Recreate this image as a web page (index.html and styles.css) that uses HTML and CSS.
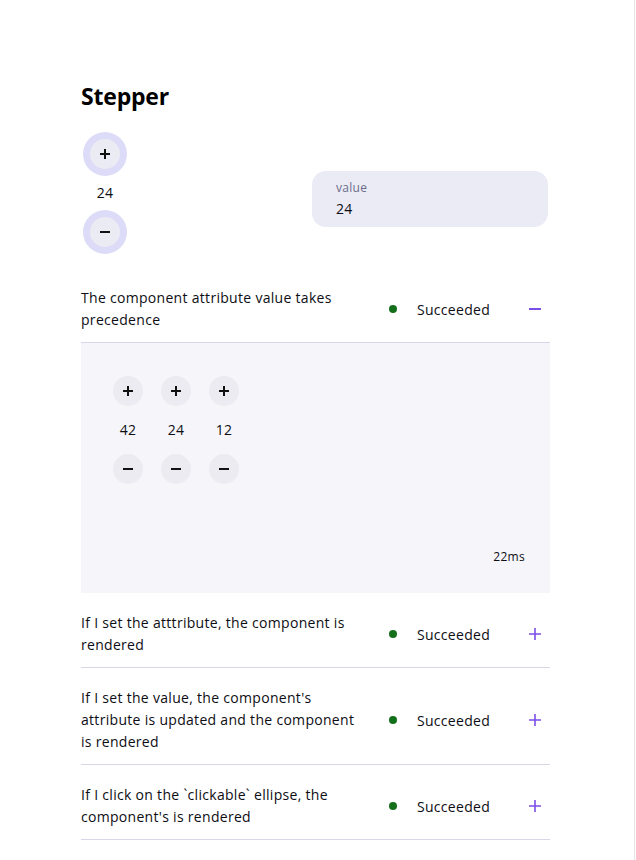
FILE: index.html
```html
<!DOCTYPE html>
<html lang="en">
<head>
<meta charset="utf-8">
<title>Stepper</title>
<link rel="stylesheet" href="styles.css">
</head>
<body>
<div class="page">
  <main class="content">
    <h1 class="title">Stepper</h1>

    <section class="demo">
      <div class="stepper stepper--focus">
        <button class="step-btn" aria-label="increment">
          <svg viewBox="0 0 12 12" width="12" height="12"><path d="M6 1v10M1 6h10" stroke="#111" stroke-width="2" fill="none"/></svg>
        </button>
        <span class="step-value">24</span>
        <button class="step-btn" aria-label="decrement">
          <svg viewBox="0 0 12 12" width="12" height="12"><path d="M1 6h10" stroke="#111" stroke-width="2" fill="none"/></svg>
        </button>
      </div>
      <div class="field">
        <span class="field-label">value</span>
        <span class="field-value">24</span>
      </div>
    </section>

    <div class="tests">
      <div class="test">
        <div class="test-head">
          <p class="test-name">The component attribute value takes precedence</p>
          <div class="status"><span class="dot"></span>Succeeded</div>
          <button class="toggle" aria-label="collapse">
            <svg viewBox="0 0 12 12" width="12" height="12"><path d="M0 6h12" stroke="#7b4ee8" stroke-width="2" fill="none"/></svg>
          </button>
        </div>
        <div class="test-body">
          <div class="steppers">
            <div class="stepper">
              <button class="step-btn" aria-label="increment"><svg viewBox="0 0 12 12" width="12" height="12"><path d="M6 1v10M1 6h10" stroke="#111" stroke-width="2" fill="none"/></svg></button>
              <span class="step-value">42</span>
              <button class="step-btn" aria-label="decrement"><svg viewBox="0 0 12 12" width="12" height="12"><path d="M1 6h10" stroke="#111" stroke-width="2" fill="none"/></svg></button>
            </div>
            <div class="stepper">
              <button class="step-btn" aria-label="increment"><svg viewBox="0 0 12 12" width="12" height="12"><path d="M6 1v10M1 6h10" stroke="#111" stroke-width="2" fill="none"/></svg></button>
              <span class="step-value">24</span>
              <button class="step-btn" aria-label="decrement"><svg viewBox="0 0 12 12" width="12" height="12"><path d="M1 6h10" stroke="#111" stroke-width="2" fill="none"/></svg></button>
            </div>
            <div class="stepper">
              <button class="step-btn" aria-label="increment"><svg viewBox="0 0 12 12" width="12" height="12"><path d="M6 1v10M1 6h10" stroke="#111" stroke-width="2" fill="none"/></svg></button>
              <span class="step-value">12</span>
              <button class="step-btn" aria-label="decrement"><svg viewBox="0 0 12 12" width="12" height="12"><path d="M1 6h10" stroke="#111" stroke-width="2" fill="none"/></svg></button>
            </div>
          </div>
          <div class="duration">22ms</div>
        </div>
      </div>

      <div class="test">
        <div class="test-head">
          <p class="test-name">If I set the atttribute, the component is rendered</p>
          <div class="status"><span class="dot"></span>Succeeded</div>
          <button class="toggle" aria-label="expand">
            <svg viewBox="0 0 12 12" width="12" height="12"><path d="M6 0v12M0 6h12" stroke="#7b4ee8" stroke-width="1.6" fill="none"/></svg>
          </button>
        </div>
      </div>

      <div class="test">
        <div class="test-head">
          <p class="test-name">If I set the value, the component's attribute is updated and the component is rendered</p>
          <div class="status"><span class="dot"></span>Succeeded</div>
          <button class="toggle" aria-label="expand">
            <svg viewBox="0 0 12 12" width="12" height="12"><path d="M6 0v12M0 6h12" stroke="#7b4ee8" stroke-width="1.6" fill="none"/></svg>
          </button>
        </div>
      </div>

      <div class="test">
        <div class="test-head">
          <p class="test-name">If I click on the `clickable` ellipse, the component's is rendered</p>
          <div class="status"><span class="dot"></span>Succeeded</div>
          <button class="toggle" aria-label="expand">
            <svg viewBox="0 0 12 12" width="12" height="12"><path d="M6 0v12M0 6h12" stroke="#7b4ee8" stroke-width="1.6" fill="none"/></svg>
          </button>
        </div>
      </div>
    </div>
  </main>
</div>
</body>
</html>
```

FILE: styles.css
```css
* { box-sizing: border-box; }

html, body {
  margin: 0;
  padding: 0;
  background: #ffffff;
}

body {
  font-family: "Open Sans", "Noto Sans", sans-serif;
  color: #0d0d14;
  font-size: 14px;
  letter-spacing: 0.3px;
}

.page {
  width: 635px;
  min-height: 860px;
  border-right: 1px solid #e4e4e6;
}

.content {
  margin-left: 81px;
  width: 469px;
  padding-top: 82px;
}

.title {
  margin: 0;
  font-size: 23px;
  line-height: 28px;
  font-weight: 700;
  letter-spacing: -0.2px;
  color: #000;
}

.demo {
  display: flex;
  align-items: flex-start;
  margin-top: 29px;
  margin-bottom: 21px;
}

.stepper {
  display: flex;
  flex-direction: column;
  align-items: center;
  width: 30px;
}

.demo .stepper {
  margin-left: 9px;
}

.step-btn {
  width: 30px;
  height: 30px;
  border: 0;
  padding: 0;
  border-radius: 50%;
  background: #ebebf1;
  display: flex;
  align-items: center;
  justify-content: center;
  cursor: pointer;
}

.stepper--focus .step-btn {
  background: #ebebf3;
  box-shadow: 0 0 0 7px #dcdcf8;
}

.step-value {
  margin: 12px 0;
  line-height: 24px;
  font-size: 14px;
}

.field {
  margin-left: 192px;
  margin-top: 32px;
  width: 236px;
  height: 56px;
  border-radius: 14px;
  background: #ebebf5;
  padding: 9px 24px 0;
  display: flex;
  flex-direction: column;
}

.field-label {
  font-size: 12px;
  line-height: 16px;
  color: #6c6b8a;
}

.field-value {
  margin-top: 3px;
  font-size: 14px;
  line-height: 20px;
}

.test-head {
  display: flex;
  align-items: center;
  padding: 19px 0 11px;
  border-bottom: 1px solid #d8d7ea;
}

.test-name {
  margin: 0;
  flex: 0 0 282px;
  line-height: 22px;
  font-size: 14px;
}

.status {
  flex: 1;
  display: flex;
  align-items: center;
  margin-left: 26px;
  font-size: 14px;
}

.dot {
  width: 8px;
  height: 8px;
  border-radius: 50%;
  background: #146f1a;
  margin-right: 20px;
}

.toggle {
  width: 30px;
  height: 30px;
  border: 0;
  padding: 0;
  background: transparent;
  display: flex;
  align-items: center;
  justify-content: center;
}

.test-body {
  background: #f6f5fa;
  padding: 33px 25px 28px 32px;
}

.steppers {
  display: flex;
  gap: 18px;
}

.duration {
  margin-top: 65px;
  text-align: right;
  font-size: 12px;
  line-height: 16px;
}
```
